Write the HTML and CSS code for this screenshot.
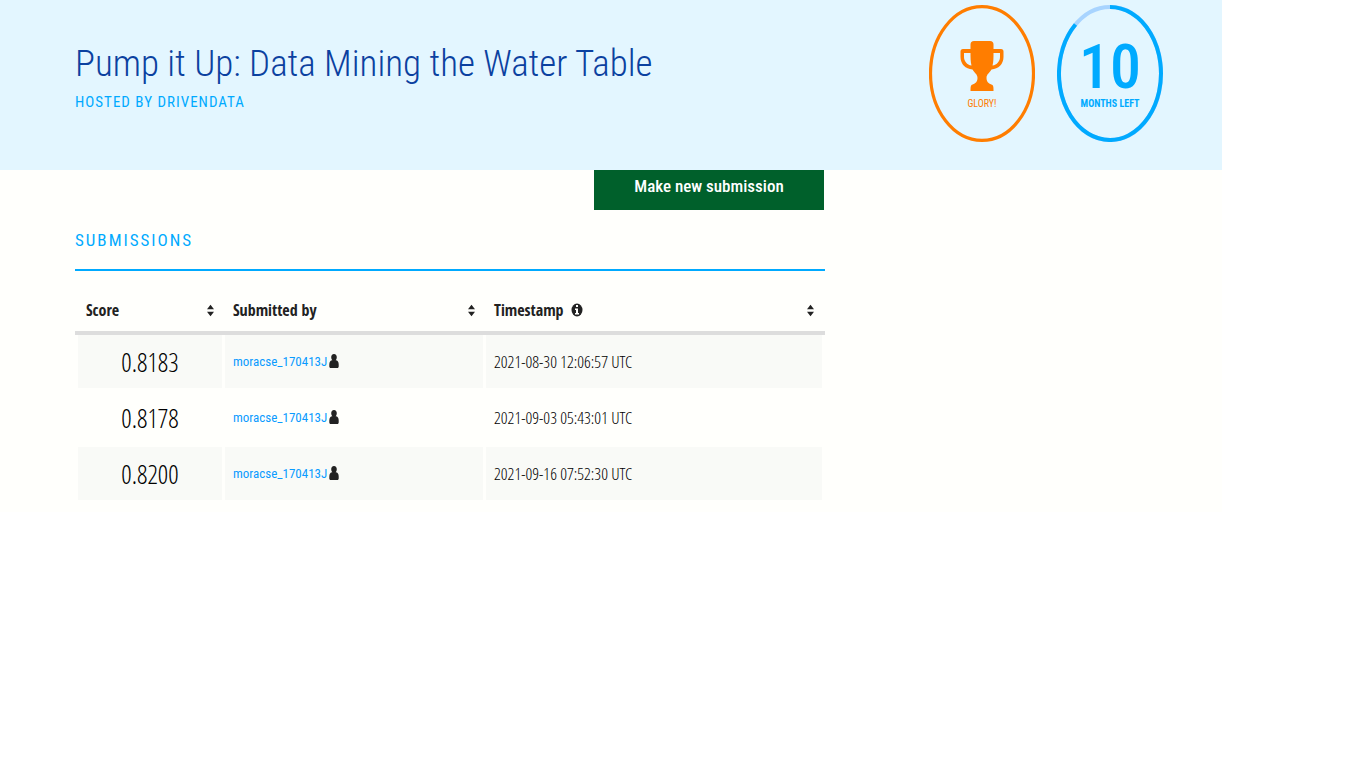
FILE: index.html
```html
<!DOCTYPE html>
<html lang="en">
<head>
<meta charset="utf-8">
<title>Pump it Up: Data Mining the Water Table</title>
<link rel="stylesheet" href="styles.css">
</head>
<body>
<svg class="sprite" aria-hidden="true">
  <symbol id="sort" viewBox="0 0 8 13"><path d="M4 0 8 5H0ZM0 8h8L4 13Z"/></symbol>
  <symbol id="user" viewBox="0 0 10 14"><path d="M5 0C3.200 0 2.200 1.300 2.200 3.300c0 1.200.4 2.200 1.100 2.900C1.300 6.400.3 7.700.3 10.500v1.700c0 1.100.5 1.800 1.500 1.800h6.400c1 0 1.500-.7 1.500-1.800v-1.700c0-2.800-1-4.100-3-4.300.7-.7 1.100-1.700 1.100-2.900C7.800 1.300 6.800 0 5 0Z"/></symbol>
</svg>
<div class="page">
  <header class="hero">
    <div class="intro">
      <h1 class="title">Pump it Up: Data Mining the Water Table</h1>
      <p class="host">HOSTED BY DRIVENDATA</p>
    </div>
    <div class="badges">
      <div class="badge prize">
        <svg class="ring" viewBox="0 0 106 137" aria-hidden="true"><ellipse cx="53" cy="68.500" rx="51.500" ry="66.900" stroke-width="3.200"/></svg>
        <svg class="trophy" viewBox="0 0 44 50" aria-hidden="true"><path fill-rule="evenodd" d="M14 0h16q3.500 0 3.500 3.500V8H41q2.500 0 2.500 2.500V16c0 7-5 12-12 12.500-1.500 3-5 4.500-5 8.500 0 4.500 3 6 6 7 1 1 1 3 1 6H10.500c0-3 0-5 1-6 3-1 6-2.500 6-7 0-4-3.500-5.500-5-8.500C5.500 28 .5 23 .5 16v-5.500Q.5 8 3 8h7.500V3.500Q10.500 0 14 0ZM10.500 12H4v4c0 4 3 8 7.500 8.500C10.500 21 10.500 16 10.500 12ZM33.500 12c0 4 0 9-1 12.500C37 24 40 20 40 16v-4Z"/></svg>
        <span class="caption">GLORY!</span>
      </div>
      <div class="badge deadline">
        <svg class="ring" viewBox="0 0 106 137" aria-hidden="true"><ellipse class="track" cx="53" cy="68.500" rx="51" ry="66.500" stroke-width="4"/><path d="M53 2A51 66.500 0 1 1 18.500 19.500" stroke-width="4"/></svg>
        <strong class="count">10</strong>
        <span class="caption">MONTHS LEFT</span>
      </div>
    </div>
  </header>
  <main class="content">
    <div class="actions"><button class="submit" type="button">Make new submission</button></div>
    <h2 class="heading">SUBMISSIONS</h2>
    <table class="results">
      <thead>
        <tr>
          <th class="score-col" scope="col"><div class="head">Score <svg class="sort"><use href="#sort"/></svg></div></th>
          <th class="user-col" scope="col"><div class="head">Submitted by <svg class="sort"><use href="#sort"/></svg></div></th>
          <th class="time-col" scope="col"><div class="head"><span class="label">Timestamp <svg class="info" viewBox="0 0 12 14"><ellipse cx="6" cy="7" rx="5.500" ry="6.500"/><path fill="#fffffc" d="M5 2h2v2H5ZM4 5.500h3V10h1v1.500H4V10h1V7H4Z"/></svg></span> <svg class="sort"><use href="#sort"/></svg></div></th>
        </tr>
      </thead>
      <tbody>
        <tr><td class="score">0.8183</td><td><a class="user" href="#">moracse_170413J</a><svg class="person"><use href="#user"/></svg></td><td class="time">2021-08-30 12:06:57 UTC</td></tr>
        <tr><td class="score">0.8178</td><td><a class="user" href="#">moracse_170413J</a><svg class="person"><use href="#user"/></svg></td><td class="time">2021-09-03 05:43:01 UTC</td></tr>
        <tr><td class="score">0.8200</td><td><a class="user" href="#">moracse_170413J</a><svg class="person"><use href="#user"/></svg></td><td class="time">2021-09-16 07:52:30 UTC</td></tr>
      </tbody>
    </table>
  </main>
</div>
</body>
</html>
```
FILE: styles.css
```css
* { box-sizing: border-box; }
body {
  margin: 0;
  background: #fff;
  color: #222;
  font-family: "Roboto Condensed", Roboto, sans-serif;
  font-size: 16px;
  line-height: 20px;
}
.sprite { display: none; }
.page { width: 89.46%; background: #fffffc; }
.hero {
  display: flex;
  justify-content: space-between;
  min-height: 170px;
  padding: 5px 59px 20px 75px;
  background: #e3f6ff;
}
.intro { padding-top: 35px; }
.title {
  margin: 0;
  color: #0b41a0;
  font-size: 37px;
  font-weight: 300;
  line-height: 48px;
}
.host {
  margin: 4px 0 0;
  color: #0af;
  font-size: 15px;
  letter-spacing: 1px;
}
.badges { display: flex; gap: 22px; align-items: flex-start; }
.badge {
  position: relative;
  display: flex;
  flex-direction: column;
  align-items: center;
  width: 106px;
  height: 137px;
  padding-top: 36px;
}
.ring { position: absolute; inset: 0; width: 100%; height: 100%; fill: none; stroke: currentColor; }
.track { stroke: #a8d4ff; }
.prize { color: #ff7d00; }
.deadline { color: #0af; }
.trophy { width: 44px; height: 50px; fill: currentColor; }
.caption { margin-top: 4px; font-size: 10px; line-height: 18px; }
.deadline .caption { font-weight: 700; }
.count { height: 50px; font-size: 62px; font-weight: 500; line-height: 52px; }
.content { width: 825px; max-width: 100%; padding: 0 0 9px 75px; }
.actions { display: flex; justify-content: flex-end; padding-right: 1px; }
.submit {
  width: 230px;
  height: 40px;
  padding: 0 0 8px;
  border: 0;
  background: #00602b;
  color: #fff;
  font-family: inherit;
  font-size: 17px;
  font-weight: 500;
}
.heading {
  margin: 0;
  padding: 17px 0 16px;
  border-bottom: 2px solid #0af;
  color: #0af;
  font-size: 17px;
  font-weight: 400;
  line-height: 26px;
  letter-spacing: 2px;
}
.results { width: 100%; margin-top: 20px; border-spacing: 0; table-layout: fixed; }
.results th {
  height: 44px;
  padding: 0 8px 2px 11px;
  border-bottom: 4px solid #ddd;
  font-family: "Open Sans Condensed", sans-serif;
  font-weight: 700;
  text-align: left;
}
.results .time-col { padding-right: 11px; }
.score-col { width: 147px; }
.user-col { width: 261px; }
.head { display: flex; align-items: center; justify-content: space-between; }
.label { display: flex; align-items: center; gap: 7px; }
.sort { width: 7px; height: 13px; fill: #222; }
.info { width: 12px; height: 14px; fill: #222; }
.results td {
  height: 56px;
  padding: 0 8px;
  border: solid #fffffc;
  border-width: 0 0 3px 3px;
}
.results td:last-child { border-right-width: 3px; }
.results tr:nth-child(odd) td { background: #f9faf7; }
.results .score,
.results .time {
  color: #000;
  font-family: "Open Sans Condensed Light", "Open Sans Condensed", sans-serif;
  font-size: 17px;
  font-weight: 300;
}
.results .score { font-size: 26px; text-align: center; }
.user { color: #0a9bff; font-size: 13px; text-decoration: none; }
.person { width: 10px; height: 14px; margin-left: 2px; fill: #222; vertical-align: -2px; }
```
